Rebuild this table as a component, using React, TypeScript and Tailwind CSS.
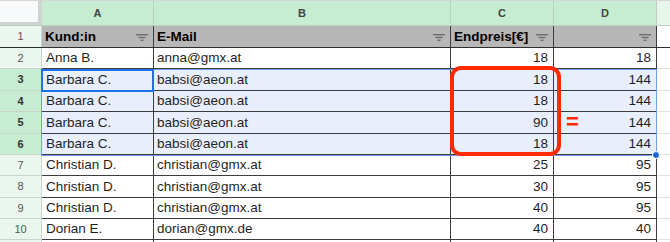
import React from 'react';

type Row = {
  n: number;
  name: string;
  mail: string;
  price: number;
  total: number;
  h: string;
};

const rows: Row[] = [
  { n: 2, name: 'Anna B.', mail: 'anna@gmx.at', price: 18, total: 18, h: 'h-[21px]' },
  { n: 3, name: 'Barbara C.', mail: 'babsi@aeon.at', price: 18, total: 144, h: 'h-[22px]' },
  { n: 4, name: 'Barbara C.', mail: 'babsi@aeon.at', price: 18, total: 144, h: 'h-[21px]' },
  { n: 5, name: 'Barbara C.', mail: 'babsi@aeon.at', price: 90, total: 144, h: 'h-[22px]' },
  { n: 6, name: 'Barbara C.', mail: 'babsi@aeon.at', price: 18, total: 144, h: 'h-[21px]' },
  { n: 7, name: 'Christian D.', mail: 'christian@gmx.at', price: 25, total: 95, h: 'h-[21px]' },
  { n: 8, name: 'Christian D.', mail: 'christian@gmx.at', price: 30, total: 95, h: 'h-[22px]' },
  { n: 9, name: 'Christian D.', mail: 'christian@gmx.at', price: 40, total: 95, h: 'h-[21px]' },
  { n: 10, name: 'Dorian E.', mail: 'dorian@gmx.de', price: 40, total: 40, h: 'h-[21px]' },
];

function FilterIcon() {
  return (
    <svg width="12" height="7" viewBox="0 0 12 7" className="shrink-0">
      <rect x="0" y="0" width="12" height="1.4" fill="#6b6b6b" />
      <rect x="2.5" y="2.8" width="7" height="1.4" fill="#6b6b6b" />
      <rect x="4.5" y="5.6" width="3" height="1.4" fill="#6b6b6b" />
    </svg>
  );
}

function ColHead({ label, w }: { label: string; w: string }) {
  return (
    <div
      className={`${w} h-full flex items-center justify-center bg-[#c6ecd1] border-r border-[#b9cfbf] text-[11px] font-bold text-[#444]`}
    >
      {label}
    </div>
  );
}

function HeadCell({ label, w, filter = true }: { label: string; w: string; filter?: boolean }) {
  return (
    <div
      className={`${w} h-full flex items-center justify-between pl-[3px] pr-[5px] pt-[1px] bg-[#b7b7b7] border-r border-[#3d3d3d] text-[13.5px] font-bold text-black`}
    >
      <span>{label}</span>
      {filter && <FilterIcon />}
    </div>
  );
}

export default function App() {
  return (
    <div className="relative w-[670px] h-[242px] overflow-hidden bg-white font-['Liberation_Sans',Arial,sans-serif] border-t border-[#d6d6d6]">
      {/* column letters */}
      <div className="flex h-[25px] border-b border-[#b9cfbf]">
        <div className="w-[42px] h-full bg-[#f8f9fa] border-r-4 border-b-[3px] border-[#d0d4d1] box-border" />
        <ColHead label="A" w="w-[112px]" />
        <ColHead label="B" w="w-[297px]" />
        <ColHead label="C" w="w-[103px]" />
        <ColHead label="D" w="w-[103px]" />
        <div className="flex-1 h-full bg-[#e6f6ea]" />
      </div>

      {/* header row */}
      <div className="flex h-[22px] border-b border-[#2e2e2e]">
        <div className="w-[42px] h-full flex items-center justify-center bg-[#ebf7ee] border-r border-[#c7d6cb] text-[11px] text-[#555]">
          1
        </div>
        <HeadCell label="Kund:in" w="w-[112px]" />
        <HeadCell label="E-Mail" w="w-[297px]" />
        <HeadCell label="Endpreis[€]" w="w-[103px]" />
        <HeadCell label="" w="w-[103px]" />
        <div className="flex-1 h-full bg-white" />
      </div>

      {rows.map((r) => {
        const sel = r.n >= 3 && r.n <= 6;
        const cellBg = sel ? 'bg-[#e8eefb]' : 'bg-white';
        const cell = `h-full flex items-center pt-[1px] border-r border-b border-[#3d3d3d] text-[13.5px] text-[#1f1f1f] ${cellBg}`;
        return (
          <div key={r.n} className={`flex ${r.h}`}>
            <div
              className={`w-[42px] h-full flex items-center justify-center border-r border-b border-[#c7d6cb] text-[11px] ${
                sel ? 'bg-[#c6ecd1] font-bold text-[#333]' : 'bg-[#ebf7ee] text-[#555]'
              }`}
            >
              {r.n}
            </div>
            <div className={`w-[112px] pl-[4px] ${cell}`}>{r.name}</div>
            <div className={`w-[297px] pl-[3px] ${cell}`}>{r.mail}</div>
            <div className={`w-[103px] justify-end pr-[5px] ${cell}`}>{r.price}</div>
            <div className={`w-[103px] justify-end pr-[5px] ${cell}`}>{r.total}</div>
            <div className="flex-1 h-full bg-white border-b border-[#e2e2e2]" />
          </div>
        );
      })}

      {/* row 11 stub */}
      <div className="flex h-[10px]">
        <div className="w-[42px] h-full bg-[#ebf7ee] border-r border-[#c7d6cb]" />
        <div className="w-[112px] h-full border-r border-[#3d3d3d]" />
        <div className="w-[297px] h-full border-r border-[#3d3d3d]" />
        <div className="w-[103px] h-full border-r border-[#3d3d3d]" />
        <div className="w-[103px] h-full border-r border-[#3d3d3d]" />
      </div>

      {/* selection range A3:D6 */}
      <div className="absolute left-[41px] top-[68px] w-[616px] h-[87px] border border-[#6f9ef0] pointer-events-none" />
      {/* active cell A3 */}
      <div className="absolute left-[41px] top-[68px] w-[113px] h-[23px] border-2 border-[#1a73e8] pointer-events-none" />
      {/* fill handle */}
      <div className="absolute left-[652px] top-[150px] w-[8px] h-[8px] rounded-full bg-[#1a64d8] border border-white" />

      {/* red annotation */}
      <div className="absolute left-[450px] top-[65px] w-[111px] h-[90px] rounded-[11px] border-4 border-[#ff2a00]" />
      <div className="absolute left-[566px] top-[110px] text-[22px] font-bold leading-none text-[#ff2a00]">=</div>
    </div>
  );
}
